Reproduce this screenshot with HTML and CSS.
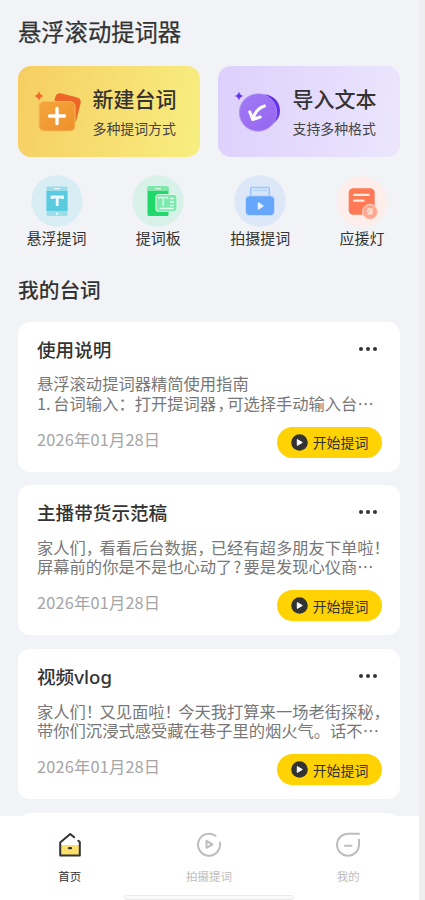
FILE: index.html
```html
<!DOCTYPE html>
<html lang="zh-CN">
<head>
<meta charset="utf-8">
<title>悬浮滚动提词器</title>
<link rel="stylesheet" href="styles.css">
</head>
<body>
<div class="app">
  <main class="content">
    <h1>悬浮滚动提词器</h1>
    <section class="heroes">
      <div class="hero yellow">
        <svg class="hero-icon" width="52" height="48" viewBox="0 0 52 48">
          <defs><linearGradient id="og" x1="0" y1="0" x2="1" y2="1"><stop offset="0" stop-color="#f5a63d"/><stop offset="1" stop-color="#ee8f2b"/></linearGradient></defs>
          <path d="M7 5Q7.800 9.200 12 10Q7.800 10.800 7 15Q6.200 10.800 2 10Q6.200 9.200 7 5Z" fill="#ef6a2c"/>
          <rect x="21" y="9" width="26" height="27" rx="4.500" transform="rotate(14 34 22)" fill="#ee6729"/>
          <rect x="7" y="15.500" width="36" height="29.500" rx="5" fill="url(#og)" stroke="#f5bd55" stroke-width="1"/>
          <path d="M25 22.500v15M17.500 30h15" stroke="#fff" stroke-width="3.400" stroke-linecap="round"/>
        </svg>
        <div class="hero-text"><h2>新建台词</h2><p>多种提词方式</p></div>
      </div>
      <div class="hero purple">
        <svg class="hero-icon" width="52" height="48" viewBox="0 0 52 48">
          <defs><linearGradient id="pg" x1="0" y1="0" x2="1" y2="1"><stop offset="0" stop-color="#a17af5"/><stop offset="1" stop-color="#9665f0"/></linearGradient></defs>
          <path d="M7 5.500Q7.700 9.300 11.500 10Q7.700 10.700 7 14.500Q6.300 10.700 2.500 10Q6.300 9.300 7 5.500Z" fill="#6633ee"/>
          <circle cx="32" cy="24.500" r="16" fill="#642fee"/>
          <circle cx="26" cy="26.500" r="18.700" fill="url(#pg)" stroke="#b093f7" stroke-width=".8"/>
          <path d="M32.500 20C27 21.500 23.500 25 20.700 33M17.700 25.800l3 7.700 7.500-2.500" fill="none" stroke="#fff" stroke-width="3" stroke-linecap="round" stroke-linejoin="round"/>
        </svg>
        <div class="hero-text"><h2>导入文本</h2><p>支持多种格式</p></div>
      </div>
    </section>
    <section class="tools">
      <div class="tool">
        <svg width="52" height="52" viewBox="0 0 52 52"><circle cx="26" cy="26" r="25.700" fill="#d9edf4"/>
          <rect x="15.500" y="11.500" width="21" height="29.500" rx="1.500" fill="#9bdeea"/><rect x="15.500" y="16" width="21" height="20" fill="#5bcbe0"/>
          <path d="M23.500 13.700h5" stroke="#e4f8fb" stroke-width="1.200" stroke-linecap="round"/><circle cx="26" cy="38.700" r="1.200" fill="#e4f8fb"/>
          <path d="M21 24v-2h10.500v2M26.200 22v9" fill="none" stroke="#eafaff" stroke-width="2.800"/></svg>
        <span>悬浮提词</span>
      </div>
      <div class="tool">
        <svg width="52" height="52" viewBox="0 0 52 52"><circle cx="26" cy="26" r="25.700" fill="#d9f2e9"/>
          <rect x="15.500" y="11.500" width="21" height="29.500" rx="1.500" fill="#20d96b"/><path d="M15.500 16v-3q0-1.500 1.500-1.500h18q1.500 0 1.500 1.500v3z" fill="#7ce9a9"/>
          <path d="M23.500 13.700h5" stroke="#e7fff0" stroke-width="1.200" stroke-linecap="round"/>
          <rect x="24" y="19.500" width="21" height="17" rx="3" fill="#7de9ac" stroke="#d6faE5" stroke-width="1.200"/>
          <path d="M27 24v-1.500h8.500V24M31.200 22.500V31M38 23.500h4M38 27h4M38 30.500h4M27.500 33.500h14.500" fill="none" stroke="#e0fced" stroke-width="1.400"/></svg>
        <span>提词板</span>
      </div>
      <div class="tool">
        <svg width="52" height="52" viewBox="0 0 52 52"><circle cx="26" cy="26" r="25.700" fill="#dce8f7"/>
          <rect x="16.700" y="12.500" width="18.600" height="12" rx="1.500" fill="#d4e5fc" stroke="#9bc5fb" stroke-width="1.600"/><path d="M19 15.500h14" stroke="#b5d4fc" stroke-width="1.500"/>
          <rect x="11.500" y="20.800" width="29" height="19.700" rx="4" fill="#66a7fb" stroke="#c9e0ff" stroke-width=".8"/>
          <path d="M24.500 28v6l4.500-3z" fill="#e7f1ff" stroke="#e7f1ff" stroke-width="1.500" stroke-linejoin="round"/></svg>
        <span>拍摄提词</span>
      </div>
      <div class="tool">
        <svg width="52" height="52" viewBox="0 0 52 52"><circle cx="26" cy="26.500" r="25.400" fill="#feeeeb"/>
          <rect x="12.700" y="13.300" width="26" height="26.500" rx="4.500" fill="#ff7955"/>
          <path d="M18 19.800h14.500M18 25.700h9.500" stroke="#ffeae4" stroke-width="2.300" stroke-linecap="round"/>
          <circle cx="34" cy="36.800" r="7.500" fill="#ffa68e" stroke="#ffd7cd" stroke-width="1"/><text x="34" y="39.300" class="badge-text">弹</text></svg>
        <span>应援灯</span>
      </div>
    </section>
    <h3 class="section-title">我的台词</h3>
    <section class="cards">
      <article class="card">
        <div class="card-head"><h4>使用说明</h4><i class="more"></i></div>
        <div class="body"><p>悬浮滚动提词器精简使用指南</p><p><span class="num">1.</span>台词输入：打开提词器<span class="narrow">，</span>可选择手动输入台⋯</p></div>
        <div class="card-foot"><time>2026年01月28日</time><button><svg width="17" height="17" viewBox="0 0 17 17"><circle cx="8.500" cy="8.500" r="8.300" fill="#333"/><path d="M6.300 5.600v5.800l5-2.900z" fill="#fff" stroke="#fff" stroke-linejoin="round"/></svg>开始提词</button></div>
      </article>
      <article class="card">
        <div class="card-head"><h4>主播带货示范稿</h4><i class="more"></i></div>
        <div class="body"><p>家人们<span class="mark">，</span>看看后台数据<span class="mark">，</span>已经有超多朋友下单啦<span class="mark">！</span></p><p>屏幕前的你是不是也心动了<span class="narrow">?</span>要是发现心仪商⋯</p></div>
        <div class="card-foot"><time>2026年01月28日</time><button><svg width="17" height="17" viewBox="0 0 17 17"><circle cx="8.500" cy="8.500" r="8.300" fill="#333"/><path d="M6.300 5.600v5.800l5-2.900z" fill="#fff" stroke="#fff" stroke-linejoin="round"/></svg>开始提词</button></div>
      </article>
      <article class="card">
        <div class="card-head"><h4>视频<span class="latin">vlog</span></h4><i class="more"></i></div>
        <div class="body"><p>家人们<span class="mark">！</span>又见面啦<span class="mark">！</span>今天我打算来一场老街探秘<span class="mark">，</span></p><p>带你们沉浸式感受藏在巷子里的烟火气。话不⋯</p></div>
        <div class="card-foot"><time>2026年01月28日</time><button><svg width="17" height="17" viewBox="0 0 17 17"><circle cx="8.500" cy="8.500" r="8.300" fill="#333"/><path d="M6.300 5.600v5.800l5-2.900z" fill="#fff" stroke="#fff" stroke-linejoin="round"/></svg>开始提词</button></div>
      </article>
      <article class="card"></article>
    </section>
  </main>
  <nav class="tabs">
    <div class="tab active">
      <svg width="26" height="26" viewBox="0 0 26 26" fill="none"><path d="M3.500 13h19v10.500h-19z" fill="#fbe06d"/><path d="M17.200 5.300 13.200 2 3.200 10.500v13h19.600V10l-1.500-1.300" stroke="#333" stroke-width="2" stroke-linejoin="round" stroke-linecap="round"/><path d="M12 16.200h2" stroke="#333" stroke-width="2.200" stroke-linecap="round"/></svg>
      <span>首页</span>
    </div>
    <div class="tab">
      <svg width="26" height="26" viewBox="0 0 26 26" fill="none" stroke="#bdbdbd" stroke-width="2" stroke-linecap="round" stroke-linejoin="round"><path d="M19.500 3.800A11 11 0 1 0 23.800 10.500"/><path d="M10.500 8.800v7l6-3.500z"/></svg>
      <span>拍摄提词</span>
    </div>
    <div class="tab">
      <svg width="26" height="26" viewBox="0 0 26 26" fill="none" stroke="#bdbdbd" stroke-width="2" stroke-linecap="round" stroke-linejoin="round"><path d="M24 1.800H13A11 11 0 1 0 24 12.800V7.800"/><path d="M10 13.700h6.500"/></svg>
      <span>我的</span>
    </div>
    <div class="home-bar"></div>
  </nav>
</div>
</body>
</html>
```
FILE: styles.css
```css
* { box-sizing: border-box; margin: 0; padding: 0; }
html, body { height: 100%; overflow: hidden; }
body {
  background: #eee;
  color: #333;
  font-family: "Noto Sans CJK SC", sans-serif;
}
.app {
  width: 419px;
  height: 900px;
  display: flex;
  flex-direction: column;
  background: #f1f3f7;
}
.content {
  flex: 1;
  min-height: 0;
  overflow: hidden;
  padding: 14px 19px 0 18px;
}
h1 { font-size: 23.3px; line-height: 34px; font-weight: 400; white-space: nowrap; -webkit-text-stroke: .25px #333; }
.heroes { display: flex; gap: 18px; margin-top: 17.5px; }
.hero {
  width: 182px;
  height: 91.500px;
  flex: none;
  border-radius: 13px;
  display: flex;
  padding-left: 14px;
}
.yellow { background: linear-gradient(100deg, #f6ce62, #f8ee80); }
.purple { background: linear-gradient(100deg, #ddd0fc, #ebe6fd); }
.hero-icon { margin-top: 20px; flex: none; }
.hero-text { margin-left: 8.500px; padding-top: 17px; white-space: nowrap; }
.hero-text h2 { font-size: 21px; line-height: 30px; font-weight: 500; }
.hero-text p { font-size: 13.900px; line-height: 20px; margin-top: 5px; color: #444; }
.tools { display: flex; justify-content: space-between; margin: 18px 4.500px 0 5px; }
.tool {
  width: 67px;
  display: flex;
  flex-direction: column;
  align-items: center;
  font-size: 15px;
  line-height: 22px;
  white-space: nowrap;
}
.tool > span { margin-top: -.5px; }
.badge-text { font-size: 6.500px; font-weight: 500; fill: #fff0ec; text-anchor: middle; }
.section-title { margin-top: 25.500px; font-size: 20.700px; line-height: 30px; font-weight: 500; }
.cards { display: flex; flex-direction: column; gap: 13.700px; margin-top: 17.800px; }
.card {
  height: 150px;
  flex: none;
  background: #fff;
  border-radius: 12px;
  padding: 13px 18px 0 19px;
}
.card-head { display: flex; justify-content: space-between; align-items: center; height: 27px; }
.card-head h4 { font-size: 18.600px; line-height: 27px; font-weight: 500; }
.latin { font-family: "Noto Sans", sans-serif; }
.more {
  width: 4px;
  height: 4px;
  margin: 1px 12.500px 0 0;
  border-radius: 50%;
  background: #333;
  box-shadow: -7px 0 #333, 7px 0 #333;
}
.body { margin-top: 12.500px; font-size: 16.300px; line-height: 19.300px; color: #777; }
.body p { white-space: nowrap; height: 19.300px; }
.num, .mark, .narrow { display: inline-block; }
.num { width: 16.300px; }
.mark { width: 13.600px; font-feature-settings: "halt"; }
.narrow { width: 11px; padding-left: 1px; font-feature-settings: "halt"; }
.card-foot { display: flex; justify-content: space-between; margin-top: 13.800px; }
time { font-size: 16.300px; line-height: 24px; color: #a5a5a5; letter-spacing: .2px; }
button {
  width: 105px;
  height: 31px;
  display: flex;
  align-items: center;
  justify-content: center;
  gap: 5px;
  border: 0;
  border-radius: 16px;
  background: #ffd203;
  color: #333;
  font: 13.900px/20px "Noto Sans CJK SC", sans-serif;
  white-space: nowrap;
}
.tabs {
  height: 84.500px;
  flex: none;
  position: relative;
  display: flex;
  background: #fff;
  padding: 16px 1px 0 0;
}
.tab {
  flex: 1;
  display: flex;
  flex-direction: column;
  align-items: center;
  gap: 10px;
  font-size: 11.500px;
  line-height: 17px;
  color: #bdbdbd;
}
.active { color: #333; }
.home-bar {
  position: absolute;
  left: 124px;
  bottom: 0;
  width: 170px;
  height: 5px;
  border: 1px solid #e9e9e9;
  border-radius: 3px;
  background: #fafafa;
}
```
